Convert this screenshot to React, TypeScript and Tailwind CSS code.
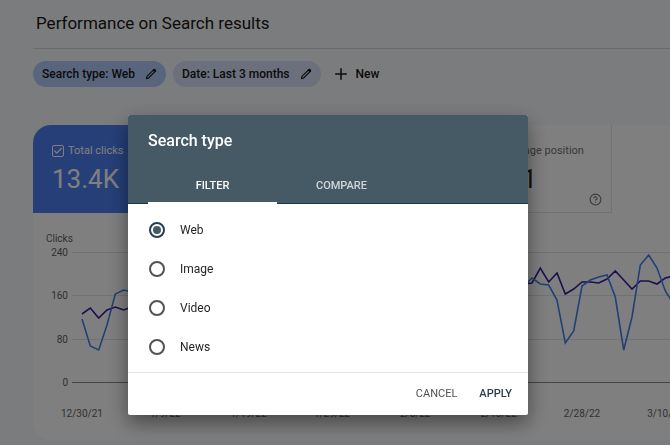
import { Check, CircleHelp, Plus } from 'lucide-react';

const METRICS = [
  { id: 'clicks', label: 'Total clicks', value: '13.4K', tile: 'border-transparent bg-[#4c7ff0] text-white' },
  { id: 'impressions', label: 'Total impressions', value: '1.02M', tile: 'border-transparent bg-[#5e35b1] text-white' },
  { id: 'ctr', label: 'Average CTR', value: '1.3%', tile: 'border-neutral-200 bg-white text-neutral-500' },
  { id: 'position', label: 'Average position', value: '11.1', tile: 'border-neutral-200 bg-white text-neutral-500' },
];

const SEARCH_TYPES = ['Web', 'Image', 'Video', 'News'];

const GRID = [
  { label: '240', y: 22 },
  { label: '160', y: 65 },
  { label: '80', y: 109 },
  { label: '0', y: 152 },
];

const DATES = ['12/30/21', '1/9/22', '1/19/22', '1/29/22', '2/8/22', '2/18/22', '2/28/22', '3/10/22'];

// one point per day, as heights inside the chart
const WEEK_CLICKS = [62, 66, 110, 118, 84, 60, 58, 60];
const WEEK_IMPRESSIONS = [77, 70, 74, 66, 72, 64, 70, 62];

const CLICKS = [
  89, 116, 120, 95, 64, 60,
  ...Array.from({ length: 47 }, (_, i) => WEEK_CLICKS[i % 8]),
  56, 48, 54, 55, 70, 113, 101, 56, 50, 47, 45, 67, 120, 87, 35, 25, 38, 61, 74,
];

const IMPRESSIONS = [
  84, 78, 88, 80, 77, 80,
  ...Array.from({ length: 47 }, (_, i) => WEEK_IMPRESSIONS[i % 8]),
  54, 53, 38, 52, 43, 64, 59, 52, 52, 53, 49, 41, 50, 59, 51, 51, 54, 48, 46,
];

const toPoints = (series: number[]) =>
  series.map((y, i) => `${(49 + (i * 25) / 3).toFixed(1)},${y}`).join(' ');

function Pencil() {
  return (
    <svg viewBox="0 0 12 12" className="size-3" fill="none" stroke="currentColor" strokeLinejoin="round" aria-hidden>
      <path d="M1.4 10.6 2 8.4 8.6 1.8Q9.2 1.2 9.8 1.8L10.2 2.2Q10.8 2.8 10.2 3.4L3.6 10Z" strokeWidth="1.1" />
      <path d="M7.4 2.2 9.8 4.6 11 3.2Q11.5 2.5 10.9 1.9L10.1 1.1Q9.5.5 8.8 1Z" fill="currentColor" stroke="none" />
    </svg>
  );
}

function Chart() {
  return (
    <svg width="740" height="200" className="block max-w-none" role="img" aria-label="Clicks per day">
      <g fontSize="10" fill="#5f6368">
        <text x="13" y="12">Clicks</text>
        {GRID.map(({ label, y }) => (
          <text key={label} x="35" y={y + 4} textAnchor="end">{label}</text>
        ))}
        {DATES.map((date, i) => (
          <text key={date} x={49 + (i * 250) / 3} y="187" textAnchor="middle">{date}</text>
        ))}
      </g>
      {GRID.map(({ label, y }) => (
        <path key={label} d={`M39 ${y + 0.5}H740`} stroke={label === '0' ? '#8a8a8a' : '#e4e4e4'} />
      ))}
      <polyline points={toPoints(IMPRESSIONS)} fill="none" stroke="#3a1c9c" strokeWidth="1.6" />
      <polyline points={toPoints(CLICKS)} fill="none" stroke="#4480ec" strokeWidth="1.6" />
    </svg>
  );
}

function MetricTile({ id, label, value, tile }: (typeof METRICS)[number]) {
  return (
    <div className={`flex h-[88px] flex-col border-r border-b px-[19px] pt-5 ${tile}`}>
      <div className="flex items-center gap-1">
        <span className="relative flex size-3 items-center">
          <input
            id={id}
            type="checkbox"
            defaultChecked
            className="size-3 appearance-none rounded-xs border border-current"
          />
          <Check className="pointer-events-none absolute inset-0 m-auto size-[10px]" strokeWidth={3} aria-hidden />
        </span>
        <label htmlFor={id} className="text-[11px] leading-3 whitespace-nowrap">{label}</label>
      </div>
      <div className={`mt-2 text-[26px] leading-7 ${id === 'position' ? 'text-neutral-800' : ''}`}>{value}</div>
      {id === 'position' && (
        <button type="button" aria-label="About average position" className="-mr-[10px] self-end">
          <CircleHelp className="size-[13px]" aria-hidden />
        </button>
      )}
    </div>
  );
}

function SearchTypeDialog() {
  return (
    <div
      role="dialog"
      aria-modal="true"
      aria-labelledby="dialog-title"
      className="w-[400px] overflow-hidden rounded-xs bg-white shadow-[0_8px_20px_rgba(0,0,0,0.45)]"
    >
      <header className="bg-[#455a64] text-white">
        <h2 id="dialog-title" className="px-5 pt-4 text-[16px] leading-5 font-medium">Search type</h2>
        <div role="tablist" className="mt-4 flex border-b border-[#1c3447] px-5 text-[11px] font-medium">
          <button role="tab" aria-selected="true" type="button" className="-mb-px h-[37px] w-[129px] border-b-2 border-white pt-[3px]">
            FILTER
          </button>
          <button role="tab" aria-selected="false" type="button" className="h-9 w-[129px] pt-[2px] text-white/75">
            COMPARE
          </button>
        </div>
      </header>
      <fieldset aria-labelledby="dialog-title" className="px-[21px] py-[6px]">
        {SEARCH_TYPES.map((type) => (
          <label key={type} className="flex h-[39px] items-center gap-[15px] text-[12px] text-neutral-800">
            <input
              type="radio"
              name="search-type"
              defaultChecked={type === 'Web'}
              className="grid size-4 appearance-none place-items-center rounded-full border-2 border-neutral-600 before:size-2 before:rounded-full checked:border-[#263d4f] checked:before:bg-[#455a64]"
            />
            {type}
          </label>
        ))}
      </fieldset>
      <footer className="flex h-[43px] items-center justify-end gap-[22px] border-t border-neutral-200 px-4 text-[11px]">
        <button type="button" className="text-neutral-600">CANCEL</button>
        <button type="button" className="font-medium text-[#263d4f]">APPLY</button>
      </footer>
    </div>
  );
}

export default function App() {
  return (
    <div className="min-h-screen overflow-hidden bg-[#f7f9fc] pb-1 font-['Roboto',sans-serif] text-neutral-900">
      <main className="pl-[33px]">
        <h1 className="flex h-[49px] items-center border-b border-neutral-300 px-[3px] text-[17px]">
          Performance on Search results
        </h1>

        <div className="mt-3 flex h-[26px] items-center text-[12px] font-medium">
          <button type="button" className="flex h-[26px] items-center gap-[10px] rounded-full bg-[#b3cbfa] px-[9px]">
            Search type: Web
            <Pencil />
          </button>
          <button type="button" className="ml-[7px] flex h-[26px] items-center gap-[10px] rounded-full bg-[#d8def8] px-[9px]">
            Date: Last 3 months
            <Pencil />
          </button>
          <button type="button" className="ml-[11px] flex items-center gap-[6px]">
            <Plus className="size-[18px]" aria-hidden />
            New
          </button>
        </div>

        <section className="mt-[38px] overflow-hidden rounded-l-[18px] bg-white">
          <div className="grid w-[579px] grid-cols-4">
            {METRICS.map((metric) => (
              <MetricTile key={metric.id} {...metric} />
            ))}
          </div>
          <div className="mt-[17px] pb-[10px]">
            <Chart />
          </div>
        </section>
      </main>

      <div className="fixed inset-0 flex items-start justify-center bg-black/50 pt-[115px] pr-[14px]">
        <SearchTypeDialog />
      </div>
    </div>
  );
}
